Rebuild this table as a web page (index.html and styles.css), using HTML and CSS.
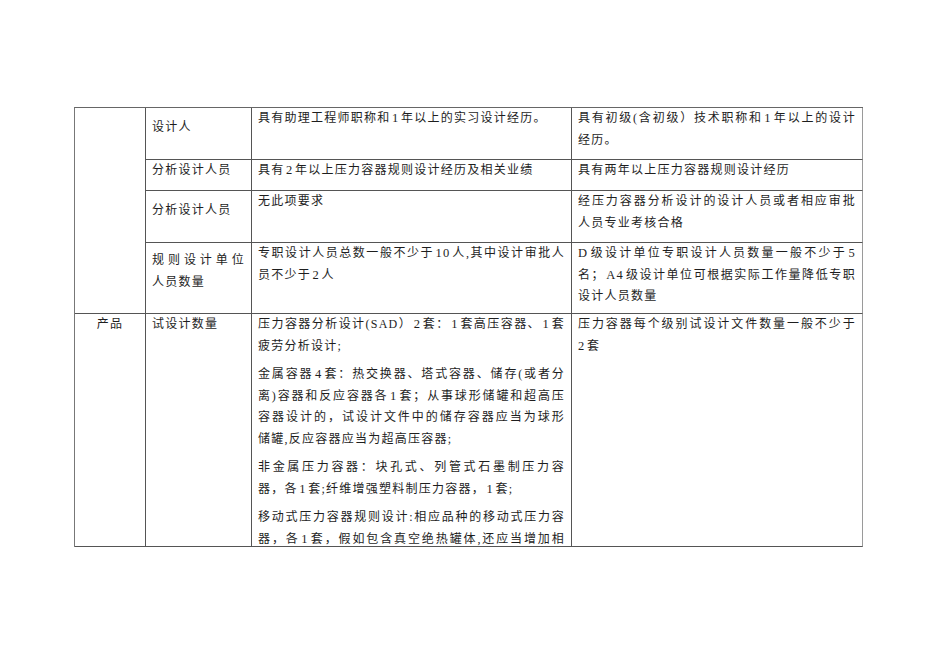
FILE: index.html
```html
<!DOCTYPE html>
<html lang="zh-CN">
<head>
<meta charset="utf-8">
<title>压力容器设计单位条件</title>
<link rel="stylesheet" href="styles.css">
</head>
<body>
<div class="sheet">
  <div class="cell c1 span4"></div>

  <div class="cell c2 mid"><p>设计人</p></div>
  <div class="cell"><p>具有助理工程师职称和<span class="lat">1</span>年以上的实习设计经历。</p></div>
  <div class="cell c4"><p><span class="ln">具有初级(含初级）技术职称和<span class="lat">1</span>年以上的设计</span>经历。</p></div>

  <div class="cell c2"><p>分析设计人员</p></div>
  <div class="cell"><p>具有<span class="lat">2</span>年以上压力容器规则设计经历及相关业绩</p></div>
  <div class="cell c4"><p>具有两年以上压力容器规则设计经历</p></div>

  <div class="cell c2 mid"><p>分析设计人员</p></div>
  <div class="cell"><p>无此项要求</p></div>
  <div class="cell c4"><p><span class="ln">经压力容器分析设计的设计人员或者相应审批</span>人员专业考核合格</p></div>

  <div class="cell c2 mid"><p><span class="ln">规则设计单位</span>人员数量</p></div>
  <div class="cell"><p><span class="ln">专职设计人员总数一般不少于<span class="lat">10</span>人,其中设计审批人</span>员不少于<span class="lat">2</span>人</p></div>
  <div class="cell c4"><p><span class="ln"><span class="lat first">D</span>级设计单位专职设计人员数量一般不少于<span class="lat last">5</span></span><span class="ln">名；<span class="lat">A4</span>级设计单位可根据实际工作量降低专职</span>设计人员数量</p></div>

  <div class="cell c1 center"><p>产品</p></div>
  <div class="cell c2"><p>试设计数量</p></div>
  <div class="cell clip">
    <p class="para"><span class="ln">压力容器分析设计(SAD）<span class="lat">2</span>套：<span class="lat">1</span>套高压容器、<span class="lat">1</span>套</span>疲劳分析设计;</p>
    <p class="para"><span class="ln">金属容器<span class="lat">4</span>套：热交换器、塔式容器、储存(或者分</span><span class="ln">离)容器和反应容器各<span class="lat">1</span>套；从事球形储罐和超高压</span><span class="ln">容器设计的，试设计文件中的储存容器应当为球形</span>储罐,反应容器应当为超高压容器;</p>
    <p class="para"><span class="ln">非金属压力容器：块孔式、列管式石墨制压力容</span>器，各<span class="lat">1</span>套;纤维增强塑料制压力容器，<span class="lat">1</span>套;</p>
    <p class="para"><span class="ln">移动式压力容器规则设计:相应品种的移动式压力容</span><span class="ln">器，各<span class="lat">1</span>套，假如包含真空绝热罐体,还应当增加相</span></p>
  </div>
  <div class="cell c4"><p><span class="ln">压力容器每个级别试设计文件数量一般不少于</span><span class="lat first">2</span>套</p></div>
</div>
</body>
</html>
```

FILE: styles.css
```css
html, body {
  margin: 0;
  padding: 0;
  background: #ffffff;
}

body {
  font-family: "Liberation Serif", "Noto Sans CJK SC", serif;
  font-size: 12px;
  color: #1e1e1e;
  letter-spacing: 1.25px;
}

.sheet {
  display: grid;
  grid-template-columns: 71px 106px 320px 291px;
  grid-template-rows: 52px 31px 52px 71px 233px;
  width: 789px;
  box-sizing: border-box;
  margin: 107px 0 0 74px;
  border-top: 1px solid #666;
  border-left: 1px solid #777;
}

.cell {
  box-sizing: border-box;
  border-right: 1px solid #555;
  border-bottom: 1px solid #555;
  padding: 0 6px;
  line-height: 21.7px;
  text-align: justify;
  min-width: 0;
}

.cell p {
  margin: 0;
}

.c4 {
  border-right-color: #9a9a9a;
}

.span4 {
  grid-row: 1 / 5;
}

.mid {
  display: flex;
  align-items: center;
  padding-bottom: 12px;
}

.mid p {
  width: 100%;
}

.center {
  text-align: center;
}

.ln {
  display: block;
  white-space: nowrap;
  text-align: justify;
  text-align-last: justify;
}

.lat {
  font-size: 12.5px;
  margin: 0 1.5px;
}

.lat.first {
  margin-left: 0;
}

.lat.last {
  margin-right: 0;
}

.clip {
  overflow: hidden;
}

.para {
  margin-bottom: 6.5px !important;
}
```
